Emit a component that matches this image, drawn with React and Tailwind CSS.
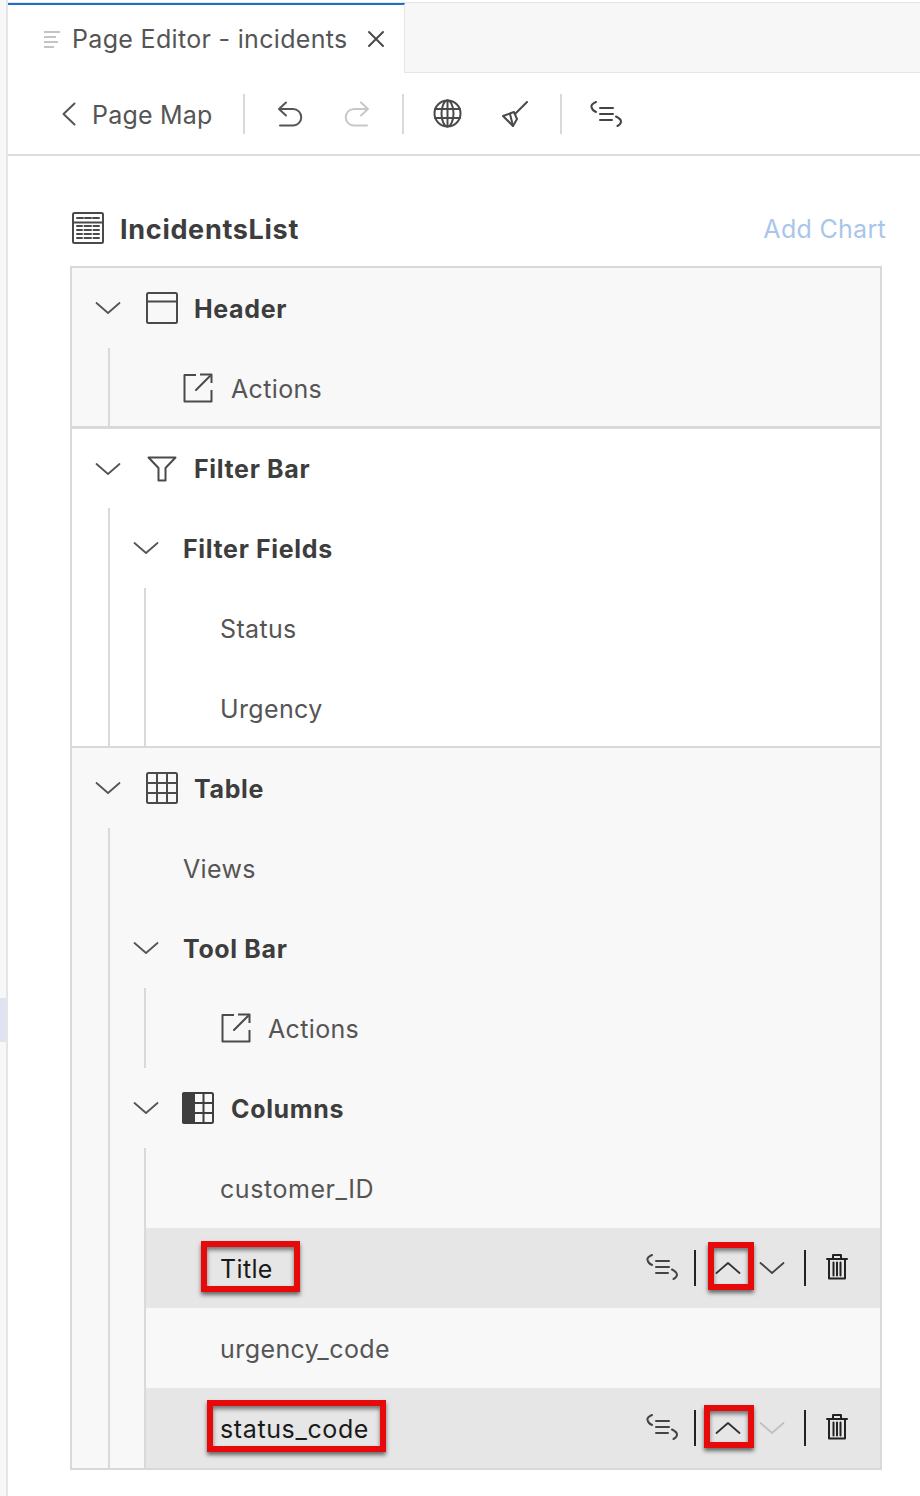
import React from "react";

const S = ({ w, h, vb, className = "", children, sw = 2, color = "#555555" }) => (
  <svg width={w} height={h} viewBox={vb || `0 0 ${w} ${h}`} fill="none" stroke={color} strokeWidth={sw} strokeLinecap="round" strokeLinejoin="round" className={`shrink-0 ${className}`}>
    {children}
  </svg>
);

const Down = ({ color = "#555555", className = "" }) => (
  <S w={26} h={14} sw={1.8} color={color} className={className}><path d="M1.5 2 L13 12 L24.5 2" /></S>
);
const Up = ({ color = "#333333", className = "" }) => (
  <S w={26} h={14} sw={1.8} color={color} className={className}><path d="M1.5 12 L13 2 L24.5 12" /></S>
);
const Brace = ({ color = "#444444", className = "" }) => (
  <S w={32} h={26} sw={2} color={color} className={className}>
    <path d="M6 1 C2.5 2.5 1 4 1.5 6 C2 8.5 3.5 10 6 11" />
    <path d="M10 7 H23 M10 13 H23 M10 19 H22" />
    <path d="M26 15.5 C29 17 31 18.5 31 20.5 C31 22.5 29.5 24 27.5 25" />
  </S>
);
const Trash = ({ className = "" }) => (
  <S w={22} h={27} color="#222222" sw={2} className={className}>
    <path d="M1 6 H21" />
    <path d="M7 5.5 V2 H15 V5.5" />
    <path d="M3 6.5 V25.5 H19 V6.5" />
    <path d="M7.5 9.5 V22.5 M11 9.5 V22.5 M14.5 9.5 V22.5" />
  </S>
);
const External = () => (
  <S w={30} h={30} sw={2} color="#4a4a4a">
    <path d="M13 2 H1.5 V28.5 H28.5 V17" strokeLinecap="butt" />
    <path d="M17 1.5 H28.5 V10" strokeLinecap="butt" />
    <path d="M27 3 L13 17" />
  </S>
);
const HeaderIcon = () => (
  <S w={32} h={32} sw={2} color="#4a4a4a">
    <rect x="1" y="1" width="30" height="30" rx="1.5" />
    <path d="M1 9.5 H31" />
  </S>
);
const TableIcon = () => (
  <S w={32} h={32} sw={2} color="#4a4a4a">
    <rect x="1" y="1" width="30" height="30" rx="1.5" />
    <path d="M1 11 H31 M1 21 H31 M11 1 V31 M21 1 V31" />
  </S>
);
const ColumnsIcon = () => (
  <S w={32} h={32} sw={2} color="#3f3f3f">
    <path d="M2.5 1 H12 V31 H2.5 A1.5 1.5 0 0 1 1 29.5 V2.5 A1.5 1.5 0 0 1 2.5 1 Z" fill="#3f3f3f" />
    <rect x="1" y="1" width="30" height="30" rx="1.5" />
    <path d="M12 11 H31 M12 21 H31 M21.5 1 V31" />
  </S>
);
const FilterIcon = () => (
  <S w={30} h={26} sw={2} color="#4a4a4a">
    <path d="M1.5 1.5 H28.5 L18.5 12 V24.5 H11.5 V12 Z" />
  </S>
);
const ListReport = ({ className = "" }) => (
  <S w={32} h={32} sw={2} color="#4a4a4a" className={className}>
    <rect x="1" y="1" width="30" height="30" rx="1.5" />
    <path d="M5 6 H11 M13 6 H19 M21 6 H27" />
    <path d="M1 10.5 H31" />
    <path d="M5 14 H10 M12.5 14 H19 M21.5 14 H27 M5 18 H10 M12.5 18 H19 M21.5 18 H27 M5 22 H10 M12.5 22 H19 M21.5 22 H27 M5 26 H10 M12.5 26 H19 M21.5 26 H27" />
  </S>
);

const base = "font-['Inter','Liberation_Sans',sans-serif]";
const Normal = ({ children, className = "", color = "text-[#555555]", tr = "tracking-[0.35px]" }) => (
  <span className={`pt-[4px] text-[25px] ${tr} ${color} ${className}`}>{children}</span>
);
const Bold = ({ children, className = "", pad = "pt-[4px]" }) => (
  <span className={`${pad} text-[25px] font-bold tracking-[0.65px] text-[#3d3d3d] ${className}`}>{children}</span>
);

const Row = ({ className = "", children }) => (
  <div className={`relative flex h-20 shrink-0 items-center ${className}`}>{children}</div>
);

const Mark = ({ className }) => (
  <div className={`absolute border-[6px] border-[#e60a0a] shadow-[0_3px_4px_rgba(0,0,0,0.55),inset_0_3px_4px_rgba(0,0,0,0.5)] ${className}`} />
);

const ColActions = ({ downColor = "#444444" }) => (
  <div className="ml-auto mr-[32px] flex items-center">
    <Brace className="mb-[3px]" />
    <div className="ml-[16px] h-[36px] w-[2px] bg-[#222222]" />
    <Up className="ml-[19px]" />
    <Down className="ml-[18px]" color={downColor} />
    <div className="ml-[19px] h-[36px] w-[2px] bg-[#222222]" />
    <Trash className="mb-[3px] ml-[20px]" />
  </div>
);

export default function App() {
  return (
    <div className={`flex h-[1496px] w-[920px] overflow-hidden bg-white ${base}`}>
      <aside className="flex w-2 shrink-0 flex-col border-r-2 border-[#e5e5e5] bg-[#f7f7f7]">
        <div className="h-[998px]" />
        <div className="h-[44px] bg-[#e0e3f0]" />
      </aside>

      <main className="flex min-w-0 flex-1 flex-col">
        {/* tab strip */}
        <div className="mt-[2px] flex h-[71px] border-y border-[#e5e5e5] bg-[#f7f7f7]">
          <div className="flex h-[70px] w-[397px] items-center border-t-2 border-r border-t-[#1b6fc9] border-r-[#e5e5e5] bg-white pl-[35px]">
            <S w={18} h={18} sw={1.8} color="#c4c4c4"><path d="M1 2 H17 M1 7 H13 M1 12 H15 M1 17 H11" strokeLinecap="butt" /></S>
            <span className="ml-[11px] pt-[2px] text-[25px] tracking-[0.32px] text-[#555555]">Page Editor - incidents</span>
            <S w={18} h={18} sw={2} color="#4a4a4a" className="ml-[19px]"><path d="M2 2 L16 16 M16 2 L2 16" /></S>
          </div>
        </div>

        {/* toolbar */}
        <div className="flex h-[83px] shrink-0 items-center border-b-2 border-[#dddddd] pl-[54px]">
          <S w={14} h={24} sw={2} color="#555555"><path d="M12.5 1.5 L1.5 12 L12.5 22.5" /></S>
          <span className="ml-[16px] pt-[4px] text-[25px] tracking-[0.2px] text-[#555555]">Page Map</span>
          <div className="ml-[31px] h-[40px] w-[2px] bg-[#d9d9d9]" />
          <S w={26} h={26} sw={2} color="#555555" className="ml-[32px]"><path d="M9 1.5 L2 8 L9 14.5 M2 8 H16 A8 8 0 0 1 16 24.5 H3" /></S>
          <S w={26} h={26} sw={2} color="#c8c8c8" className="ml-[41px]"><path d="M17 1.5 L24 8 L17 14.5 M24 8 H10 A8 8 0 0 0 10 24.5 H23" /></S>
          <div className="ml-[32px] h-[40px] w-[2px] bg-[#d9d9d9]" />
          <S w={29} h={29} sw={2} color="#4a4a4a" className="ml-[29px]">
            <circle cx="14.5" cy="14.5" r="13" />
            <ellipse cx="14.5" cy="14.5" rx="6" ry="13" />
            <path d="M2 10 H27 M2 19 H27 M14.5 1.5 V27.5" />
          </S>
          <S w={26} h={26} sw={2} color="#4a4a4a" className="ml-[40px]">
            <path d="M25 1 L13 13" />
            <path d="M1 15 L12 11 L15 18 L11 25 Z" />
            <path d="M8 13 L11 25" />
          </S>
          <div className="ml-[32px] h-[40px] w-[2px] bg-[#d9d9d9]" />
          <Brace className="ml-[28px]" />
        </div>

        {/* page title */}
        <div className="flex h-[110px] shrink-0 items-center pt-[37px] pl-[64px] pr-[34px]">
          <ListReport className="mb-[3px]" />
          <span className="ml-[16px] pt-[2px] text-[27px] font-bold tracking-[0.7px] text-[#3d3d3d]">IncidentsList</span>
          <span className="ml-auto text-[25px] tracking-[0.3px] text-[#a9c6ea]">Add Chart</span>
        </div>

        {/* tree */}
        <div className="ml-[62px] mr-[38px] flex h-[1204px] flex-col border-2 border-[#d9d9d9]">
          {/* Header */}
          <section className="h-[158px] shrink-0 overflow-hidden bg-[#f8f8f8]">
            <Row>
              <Down className="ml-[23px]" />
              <div className="ml-[25px]"><HeaderIcon /></div>
              <Bold className="ml-[16px]">Header</Bold>
            </Row>
            <div className="ml-[36px] border-l-2 border-[#d9d9d9]">
              <Row className="pl-[73px]">
                <External />
                <Normal className="ml-[18px]">Actions</Normal>
              </Row>
            </div>
          </section>
          <div className="h-[3px] shrink-0 bg-[#d9d9d9]" />

          {/* Filter Bar */}
          <section className="h-[317px] shrink-0 overflow-hidden bg-white">
            <Row className="h-[79px]">
              <Down className="ml-[23px]" />
              <div className="ml-[26px]"><FilterIcon /></div>
              <Bold className="ml-[17px]" pad="pt-[2px]">Filter Bar</Bold>
            </Row>
            <div className="ml-[36px] border-l-2 border-[#d9d9d9]">
              <Row>
                <Down className="ml-[23px]" />
                <Bold className="ml-[24px]">Filter Fields</Bold>
              </Row>
              <div className="ml-[34px] border-l-2 border-[#d9d9d9]">
                <Row className="pl-[74px]"><Normal>Status</Normal></Row>
                <Row className="pl-[74px]"><Normal>Urgency</Normal></Row>
              </div>
            </div>
          </section>
          <div className="h-[2px] shrink-0 bg-[#d9d9d9]" />

          {/* Table */}
          <section className="flex-1 bg-[#f8f8f8]">
            <Row>
              <Down className="ml-[23px]" />
              <div className="ml-[25px]"><TableIcon /></div>
              <Bold className="ml-[16px]">Table</Bold>
            </Row>
            <div className="ml-[36px] border-l-2 border-[#d9d9d9]">
              <Row className="pl-[73px]"><Normal>Views</Normal></Row>
              <Row>
                <Down className="ml-[23px]" />
                <Bold className="ml-[24px]">Tool Bar</Bold>
              </Row>
              <div className="ml-[34px] border-l-2 border-[#d9d9d9]">
                <Row className="pl-[75px]">
                  <External />
                  <Normal className="ml-[17px]">Actions</Normal>
                </Row>
              </div>
              <Row>
                <Down className="ml-[23px]" />
                <div className="ml-[23px]"><ColumnsIcon /></div>
                <Bold className="ml-[17px]">Columns</Bold>
              </Row>
              <div className="ml-[34px] border-l-2 border-[#d9d9d9]">
                <Row className="pl-[74px]"><Normal tr="tracking-[0.55px]">customer_ID</Normal></Row>
                <Row className="bg-[#e6e6e6] pl-[74px]">
                  <Normal color="text-[#1a1a1a]">Title</Normal>
                  <ColActions />
                  <Mark className="left-[55px] top-[13px] h-[51px] w-[99px]" />
                  <Mark className="left-[562px] top-[14px] h-[48px] w-[46px]" />
                </Row>
                <Row className="pl-[74px]"><Normal tr="tracking-[0.43px]">urgency_code</Normal></Row>
                <Row className="bg-[#e6e6e6] pl-[74px]">
                  <Normal color="text-[#1a1a1a]" tr="tracking-[0.62px]">status_code</Normal>
                  <ColActions downColor="#c0c0c0" />
                  <Mark className="left-[61px] top-[12px] h-[52px] w-[179px]" />
                  <Mark className="left-[558px] top-[17px] h-[43px] w-[50px]" />
                </Row>
              </div>
            </div>
          </section>
        </div>
      </main>
    </div>
  );
}
